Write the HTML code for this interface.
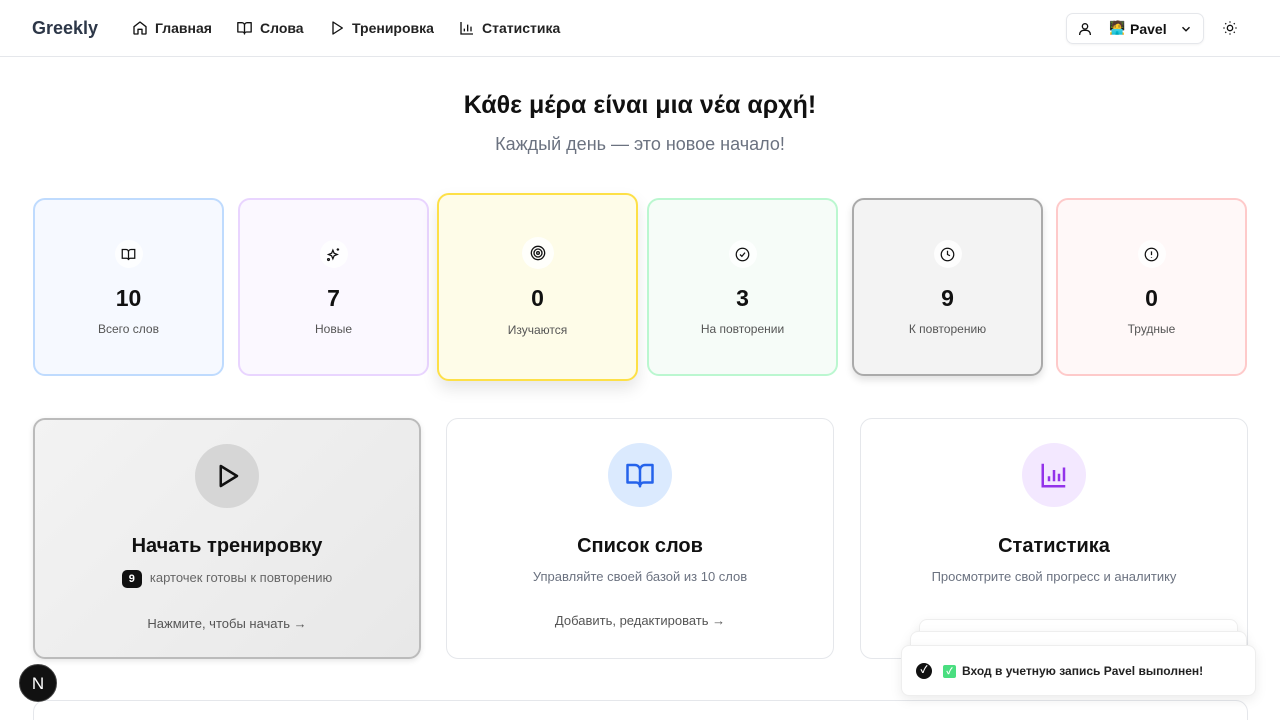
<!DOCTYPE html>
<html><head><meta charset="utf-8"><style>
*{box-sizing:border-box;margin:0;padding:0}
html,body{width:1280px;height:720px;overflow:hidden}
body{background:#fff;font-family:"Liberation Sans","Noto Sans CJK SC",sans-serif;color:#111;position:relative}
.nav{height:57px;border-bottom:1px solid #e5e7eb;position:relative}
.logo{position:absolute;left:32px;top:18px;font-size:18px;font-weight:700;color:#2d3748}
.nl{position:absolute;top:20px;font-size:14px;font-weight:600;color:#222;display:flex;align-items:center;gap:7px}
.user{position:absolute;left:1066px;top:13px;width:138px;height:31px;border:1px solid #e5e7eb;border-radius:7px;box-shadow:0 1px 2px rgba(0,0,0,.05)}
h1{position:absolute;top:91px;width:100%;text-align:center;font-size:25px;font-weight:700}
.sub{position:absolute;top:134px;width:100%;text-align:center;font-size:18px;color:#6b7280}
.st{position:absolute;top:198px;width:191px;height:178px;border:2px solid;border-radius:12px;text-align:center}
.st .ic{position:absolute;left:50%;top:40px;margin-left:-14px;width:28px;height:28px;border-radius:50%;background:rgba(255,255,255,.8);display:flex;align-items:center;justify-content:center}
.st .n{position:absolute;top:85px;width:100%;font-size:23px;font-weight:700}
.st .l{position:absolute;top:122px;width:100%;font-size:12px;color:#555}
.bc{position:absolute;top:418px;width:388px;height:241px;border:1px solid #e5e7eb;border-radius:12px;text-align:center;background:#fff}
.bc .ci{position:absolute;left:50%;margin-left:-32px;top:24px;width:64px;height:64px;border-radius:50%;display:flex;align-items:center;justify-content:center}
.bc .t{position:absolute;top:116px;width:100%;font-size:20px;font-weight:700}
.bc .d{position:absolute;top:150px;width:100%;font-size:13px;color:#6b7280}
.bc .a{position:absolute;top:194px;width:100%;font-size:13px;color:#555}
.toast{position:absolute;background:#fff;border:1px solid #eee;border-radius:8px;box-shadow:0 4px 12px rgba(0,0,0,.08)}
</style></head><body>
<div class="nav">
<div class="logo">Greekly</div>
<div class="nl" style="left:132px"><svg width="16" height="16" viewBox="0 0 24 24" fill="none" stroke="#111" stroke-width="2" stroke-linejoin="round"><path d="M3 10l9-7 9 7v10a1 1 0 0 1-1 1h-5v-7h-6v7H4a1 1 0 0 1-1-1z"/></svg>Главная</div>
<div class="nl" style="left:236px"><svg width="17" height="16" viewBox="0 0 24 24" fill="none" stroke="#111" stroke-width="2" stroke-linejoin="round"><path d="M2 4h6a4 4 0 0 1 4 4v13a3 3 0 0 0-3-3H2zM22 4h-6a4 4 0 0 0-4 4v13a3 3 0 0 1 3-3h7z"/></svg>Слова</div>
<div class="nl" style="left:329px"><svg width="16" height="16" viewBox="0 0 24 24" fill="none" stroke="#111" stroke-width="2" stroke-linejoin="round"><path d="M6 3l14 9-14 9z"/></svg>Тренировка</div>
<div class="nl" style="left:459px"><svg width="16" height="16" viewBox="0 0 24 24" fill="none" stroke="#111" stroke-width="2"><path d="M3 3v18h18M8 17v-4M13 17V7M18 17v-7"/></svg>Статистика</div>
<div class="user">
<svg style="position:absolute;left:10px;top:7px" width="16" height="16" viewBox="0 0 24 24" fill="none" stroke="#111" stroke-width="2"><circle cx="12" cy="8" r="4"/><path d="M4 21v-1a6 6 0 0 1 6-6h4a6 6 0 0 1 6 6v1"/></svg>
<span style="position:absolute;left:42px;top:6px;font-size:13px">🧑‍💻</span>
<span style="position:absolute;left:63px;top:7px;font-size:14px;font-weight:700">Pavel</span>
<svg style="position:absolute;left:112px;top:8px" width="14" height="14" viewBox="0 0 24 24" fill="none" stroke="#111" stroke-width="2.5"><path d="M6 9l6 6 6-6"/></svg>
</div>
<svg style="position:absolute;left:1222px;top:20px" width="16" height="16" viewBox="0 0 24 24" fill="none" stroke="#111" stroke-width="2"><circle cx="12" cy="12" r="4"/><path d="M12 2v2M12 20v2M4.9 4.9l1.4 1.4M17.7 17.7l1.4 1.4M2 12h2M20 12h2M4.9 19.1l1.4-1.4M17.7 6.3l1.4-1.4"/></svg>
</div>
<h1>Κάθε μέρα είναι μια νέα αρχή!</h1>
<div class="sub">Каждый день — это новое начало!</div>

<div class="st" style="left:33px;border-color:#bfdbfe;background:#f6f9ff"><div class="ic"><svg width="15" height="15" viewBox="0 0 24 24" fill="none" stroke="#111" stroke-width="2"><path d="M2 4h6a4 4 0 0 1 4 4v13a3 3 0 0 0-3-3H2zM22 4h-6a4 4 0 0 0-4 4v13a3 3 0 0 1 3-3h7z"/></svg></div><div class="n">10</div><div class="l">Всего слов</div></div>
<div class="st" style="left:238px;border-color:#e9d5ff;background:#fbf8ff"><div class="ic"><svg width="15" height="15" viewBox="0 0 24 24" fill="none" stroke="#111" stroke-width="2"><path d="M11 5l2 5 5 2-5 2-2 5-2-5-5-2 5-2zM19 2v4M17 4h4"/><circle cx="4" cy="20" r="1.5"/></svg></div><div class="n">7</div><div class="l">Новые</div></div>
<div class="st" style="left:437px;top:193px;width:201px;height:188px;border-color:#fde047;background:#fefce8;box-shadow:0 8px 16px rgba(0,0,0,.1)"><div class="ic" style="top:42px;width:32px;height:32px;margin-left:-16px"><svg width="16" height="16" viewBox="0 0 24 24" fill="none" stroke="#111" stroke-width="2"><circle cx="12" cy="12" r="10"/><circle cx="12" cy="12" r="6"/><circle cx="12" cy="12" r="2"/></svg></div><div class="n" style="top:90px">0</div><div class="l" style="top:128px">Изучаются</div></div>
<div class="st" style="left:647px;border-color:#bbf7d0;background:#f6fcf8"><div class="ic"><svg width="15" height="15" viewBox="0 0 24 24" fill="none" stroke="#111" stroke-width="2"><circle cx="12" cy="12" r="10"/><path d="M8 12l3 3 5-6"/></svg></div><div class="n">3</div><div class="l">На повторении</div></div>
<div class="st" style="left:852px;border-color:#aaa;background:#f3f3f3;box-shadow:0 4px 8px rgba(0,0,0,.12)"><div class="ic"><svg width="15" height="15" viewBox="0 0 24 24" fill="none" stroke="#111" stroke-width="2"><circle cx="12" cy="12" r="10"/><path d="M12 6v6l4 2"/></svg></div><div class="n">9</div><div class="l">К повторению</div></div>
<div class="st" style="left:1056px;border-color:#fecaca;background:#fff8f8"><div class="ic"><svg width="15" height="15" viewBox="0 0 24 24" fill="none" stroke="#111" stroke-width="2"><circle cx="12" cy="12" r="10"/><path d="M12 7v6M12 16v1"/></svg></div><div class="n">0</div><div class="l">Трудные</div></div>

<div class="bc" style="left:33px;background:linear-gradient(135deg,#f3f3f3,#e8e8e8);border:2px solid #bbb;box-shadow:0 2px 6px rgba(0,0,0,.1)">
<div class="ci" style="background:#d6d6d6"><svg width="30" height="30" viewBox="0 0 24 24" fill="none" stroke="#111" stroke-width="2" stroke-linejoin="round"><path d="M7 4l13 8-13 8z"/></svg></div>
<div class="t" style="top:115px">Начать тренировку</div>
<div class="d" style="top:150px;color:#666"><span style="display:inline-block;background:#111;color:#fff;font-weight:700;font-size:11px;border-radius:5px;padding:3px 7px;margin-right:8px">9</span>карточек готовы к повторению</div>
<div class="a" style="top:196px">Нажмите, чтобы начать →</div></div>
<div class="bc" style="left:446px"><div class="ci" style="background:#dbeafe"><svg width="30" height="30" viewBox="0 0 24 24" fill="none" stroke="#2563eb" stroke-width="2" stroke-linejoin="round"><path d="M2 4h6a4 4 0 0 1 4 4v13a3 3 0 0 0-3-3H2zM22 4h-6a4 4 0 0 0-4 4v13a3 3 0 0 1 3-3h7z"/></svg></div><div class="t">Список слов</div><div class="d">Управляйте своей базой из 10 слов</div><div class="a">Добавить, редактировать →</div></div>
<div class="bc" style="left:860px"><div class="ci" style="background:#f3e8ff"><svg width="30" height="30" viewBox="0 0 24 24" fill="none" stroke="#9333ea" stroke-width="2"><path d="M3 3v18h18M8 17v-4M12 17V8M16 17v-6M20 17V6"/></svg></div><div class="t">Статистика</div><div class="d">Просмотрите свой прогресс и аналитику</div></div>
<div style="position:absolute;left:33px;top:700px;width:1215px;height:40px;border:1px solid #e5e7eb;border-radius:12px"></div>

<div class="toast" style="left:919px;top:619px;width:319px;height:30px"></div>
<div class="toast" style="left:910px;top:631px;width:337px;height:30px"></div>
<div class="toast" style="left:901px;top:645px;width:355px;height:51px;font-size:12px;font-weight:600">
<span style="position:absolute;left:14px;top:17px;width:16px;height:16px;border-radius:50%;background:#111;color:#fff;font-size:10px;text-align:center;line-height:16px">✓</span>
<span style="position:absolute;left:41px;top:19px;width:13px;height:13px;border-radius:2px;background:#4ade80;color:#fff;font-size:9px;text-align:center;line-height:13px">✓</span>
<span style="position:absolute;left:60px;top:18px;color:#222">Вход в учетную запись Pavel выполнен!</span></div>

<div style="position:absolute;left:19px;top:664px;width:38px;height:38px;border-radius:50%;background:#111;color:#fff;font-size:17px;text-align:center;line-height:38px;border:1px solid #444">N</div>
</body></html>
